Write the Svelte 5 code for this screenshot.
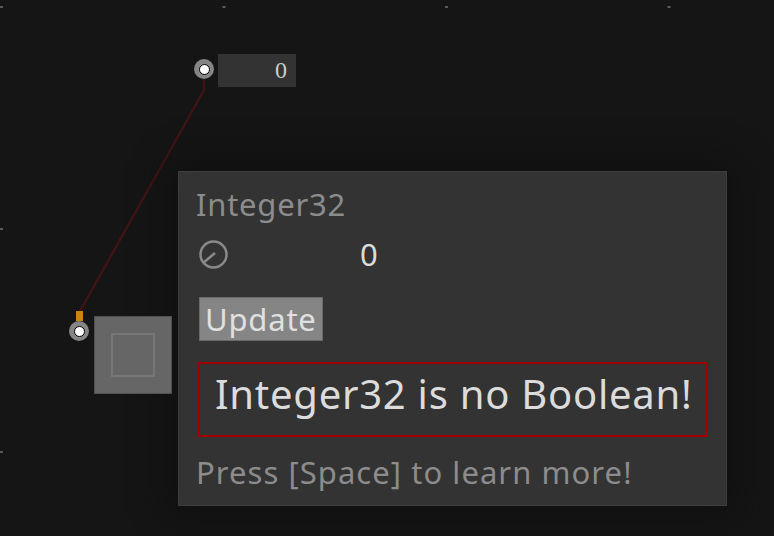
<script>
  // grid marks on the patch canvas
  const step = 222.5;
  const dots = [
    ...[0, 1, 2, 3].map((i) => ({ x: i * step, y: 6 })),
    { x: 0, y: 228 },
    { x: 0, y: 451 }
  ];
</script>

<div class="canvas">
  <svg class="wires" width="774" height="536" viewBox="0 0 774 536">
    {#each dots as d}
      <rect x={d.x} y={d.y} width="3" height="2" fill="#5a5a5a" />
    {/each}
    <path d="M204 78v12L79.500 312" fill="none" stroke="#401414" stroke-width="2.400" />
  </svg>

  <div class="port port--top"><span></span></div>
  <div class="value-node">0</div>

  <div class="pin"></div>
  <div class="port port--bottom"><span></span></div>
  <div class="toggle"><div class="toggle-inner"></div></div>

  <section class="panel">
    <h1>Integer32</h1>
    <div class="row">
      <svg width="30" height="30" viewBox="0 0 30 30" fill="none" stroke="#8a8a8a" stroke-width="2.500">
        <circle cx="14.500" cy="14.500" r="13" />
        <path d="M4 23l12-10" />
      </svg>
      <span class="value">0</span>
    </div>
    <button class="update">Update</button>
    <div class="error">Integer32 is no Boolean!</div>
    <p class="hint">Press [Space] to learn more!</p>
  </section>
</div>

<style>
  :global(body) {
    background: #151515;
  }

  .canvas {
    position: relative;
    width: 774px;
    height: 536px;
    overflow: hidden;
    background: #151515;
    font-family: "Noto Sans", sans-serif;
  }

  .wires {
    position: absolute;
    left: 0;
    top: 0;
  }

  .port {
    position: absolute;
    width: 20px;
    height: 20px;
    border-radius: 50%;
    background: #858585;
    display: flex;
    align-items: center;
    justify-content: center;
  }

  .port span {
    width: 9px;
    height: 9px;
    border-radius: 50%;
    background: #fff;
    border: 1px solid #000;
    box-sizing: content-box;
  }

  .port--top { left: 194px; top: 59px; }
  .port--bottom { left: 69px; top: 321px; }

  .value-node {
    position: absolute;
    left: 218px;
    top: 54px;
    width: 78px;
    height: 33px;
    box-sizing: border-box;
    padding-right: 9px;
    background: #333;
    color: #ccc;
    font: 24px/33px "Liberation Serif", serif;
    text-align: right;
  }

  .pin {
    position: absolute;
    left: 76px;
    top: 311px;
    width: 7px;
    height: 10px;
    background: #c8860a;
  }

  .toggle {
    position: absolute;
    z-index: 1;
    left: 94px;
    top: 316px;
    width: 78px;
    height: 78px;
    box-sizing: border-box;
    background: #666;
    border: 1px solid #505050;
    display: flex;
    align-items: center;
    justify-content: center;
  }

  .toggle-inner {
    width: 44px;
    height: 44px;
    box-sizing: border-box;
    border: 2px solid #777;
  }

  .panel {
    position: absolute;
    left: 178px;
    top: 171px;
    width: 549px;
    height: 335px;
    box-sizing: border-box;
    padding: 14px 19px 0 17px;
    background: #333;
    border: 1px solid #3d3d3d;
    box-shadow: 0 0 30px 10px #101010;
    display: flex;
    flex-direction: column;
    align-items: flex-start;
  }

  h1 {
    margin: 0;
    font-size: 31px;
    line-height: 36px;
    font-weight: 400;
    letter-spacing: 0.750px;
    color: #8c8c8c;
  }

  .row {
    display: flex;
    align-items: center;
    margin: 18px 0 0 3px;
    height: 30px;
  }

  .value {
    margin: 0 0 3px 131px;
    font-size: 31px;
    color: #dcdcdc;
  }

  .update {
    margin: 27px 0 0 3px;
    width: 124px;
    height: 44px;
    padding: 0 0 0 5px;
    text-align: left;
    background: #858585;
    border: 1px solid #6a6a6a;
    color: #e0e0e0;
    font: 31px/38px "Noto Sans", sans-serif;
    letter-spacing: 0.800px;
    white-space: nowrap;
  }

  .error {
    margin: 21px 0 0 2px;
    width: 510px;
    height: 75px;
    box-sizing: border-box;
    padding-left: 15px;
    border: 2px solid #a00000;
    color: #dcdcdc;
    font-size: 40px;
    line-height: 60px;
    letter-spacing: 0.750px;
    white-space: nowrap;
  }

  .hint {
    margin: 17px 0 0;
    font-size: 31px;
    line-height: 36px;
    letter-spacing: 1.050px;
    color: #8c8c8c;
    white-space: nowrap;
  }
</style>
